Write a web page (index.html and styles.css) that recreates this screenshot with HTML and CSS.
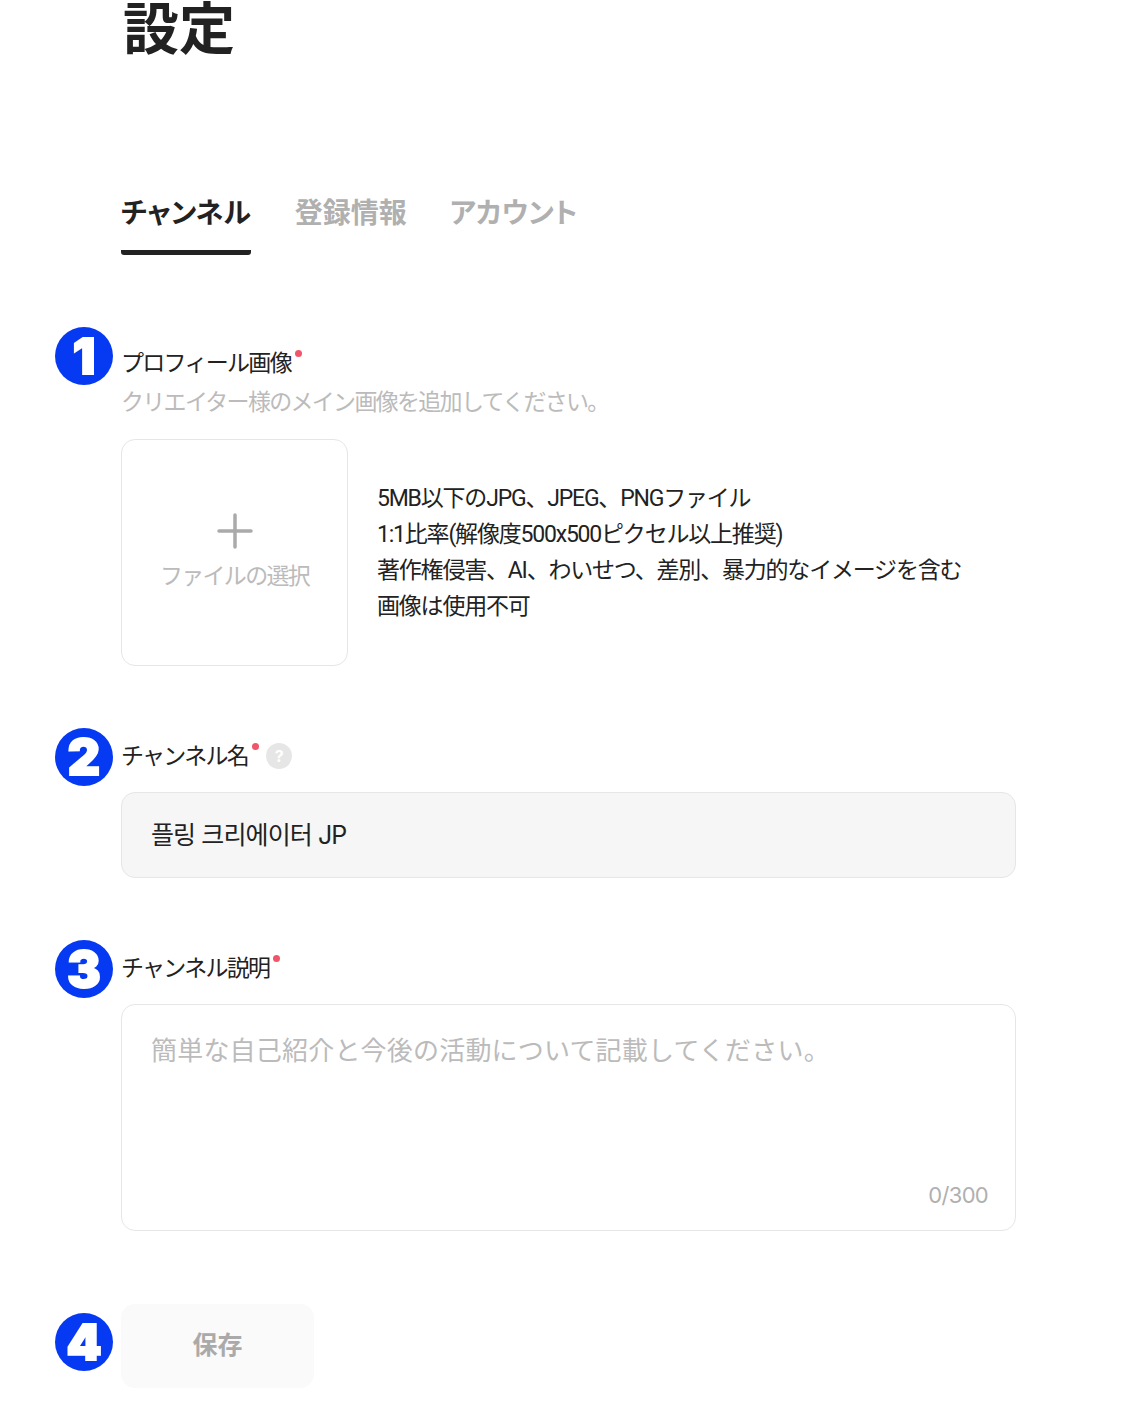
FILE: index.html
```html
<!DOCTYPE html>
<html lang="ja">
<head>
    <meta charset="UTF-8">
    <title>設定</title>
    <link rel="stylesheet" href="styles.css">
</head>
<body>
<div class="page">
    <h1 class="title">設定</h1>
    <ul class="tabs">
        <li class="active">チャンネル</li>
        <li>登録情報</li>
        <li>アカウント</li>
    </ul>

    <div class="section first">
        <div class="num">1</div>
        <div class="label">プロフィール画像<span class="req"></span></div>
        <div class="sub">クリエイター様のメイン画像を追加してください。</div>
        <div class="upload-row">
            <div class="upload">
                <svg class="plus" width="36" height="36" viewBox="0 0 36 36">
                    <path d="M18 2V34M2 18H34" stroke="#aaaaaa" stroke-width="3.5" stroke-linecap="round" fill="none"/>
                </svg>
                <span>ファイルの選択</span>
            </div>
            <div class="notes">
                <p>5MB以下のJPG、JPEG、PNGファイル</p>
                <p>1:1比率(解像度500x500ピクセル以上推奨)</p>
                <p>著作権侵害、AI、わいせつ、差別、暴力的なイメージを含む</p>
                <p>画像は使用不可</p>
            </div>
        </div>
    </div>

    <div class="section second">
        <div class="num">2</div>
        <div class="label">チャンネル名<span class="req"></span><span class="help">?</span></div>
        <div class="input">플링 크리에이터 JP</div>
    </div>

    <div class="section third">
        <div class="num">3</div>
        <div class="label">チャンネル説明<span class="req"></span></div>
        <div class="textarea">
            <div class="holder">簡単な自己紹介と今後の活動について記載してください。</div>
            <div class="count">0/300</div>
        </div>
    </div>

    <div class="section fourth">
        <div class="num">4</div>
        <div class="save">保存</div>
    </div>
</div>
</body>
</html>
```

FILE: styles.css
```css
*{
    margin: 0;
    padding: 0;
    list-style: none;
    box-sizing: border-box;
}
html,body{
    height: 1408px;
    overflow: hidden;
    background-color: #ffffff;
}
body{
    font-family: "Inter", "Noto Sans CJK JP", "Noto Sans CJK KR", sans-serif;
    color: #222222;
}
.page{
    padding-left: 121px;
    width: 1016px;
}
.title{
    font-family: "Noto Sans CJK JP", sans-serif;
    font-size: 56px;
    line-height: 50px;
    font-weight: 700;
    padding-left: 2px;
}
.tabs{
    display: flex;
    gap: 43px;
    margin-top: 120px;
}
.tabs li{
    font-size: 28px;
    line-height: 40px;
    font-weight: 700;
    color: #b0b0b0;
    height: 85px;
    padding-top: 23px;
    font-feature-settings: "palt";
}
.tabs .active{
    color: #222222;
    border-bottom: 5px solid #222222;
    border-radius: 0 0 3px 3px;
    margin-right: 1px;
}
.section{
    position: relative;
}
.first{
    margin-top: 89px;
}
.second{
    margin-top: 71px;
}
.third{
    margin-top: 71px;
}
.fourth{
    margin-top: 73px;
}
.num{
    position: absolute;
    left: -66px;
    top: -9px;
    width: 58px;
    height: 58px;
    border-radius: 50%;
    background-color: #0639f2;
    color: #ffffff;
    font-family: "Inter", sans-serif;
    font-size: 50px;
    line-height: 58px;
    font-weight: 900;
    text-align: center;
    -webkit-text-stroke: 2px #ffffff;
}
.first .num{
    top: -17px;
}
.fourth .num{
    top: 9px;
}
.label{
    display: flex;
    align-items: center;
    font-size: 23px;
    line-height: 34px;
    letter-spacing: -1.7px;
    color: #222222;
    height: 36px;
    padding-top: 2px;
}
.req{
    width: 7px;
    height: 7px;
    border-radius: 50%;
    background-color: #f0566a;
    margin: -20px 0 0 4px;
}
.help{
    width: 26px;
    height: 26px;
    border-radius: 50%;
    background-color: #e6e6e6;
    color: #ffffff;
    font-size: 16px;
    font-weight: 700;
    line-height: 26px;
    text-align: center;
    margin-left: 7px;
    letter-spacing: 0;
}
.sub{
    font-size: 23px;
    line-height: 36px;
    letter-spacing: -1.7px;
    color: #bbbbbb;
    margin-top: 4px;
}
.upload-row{
    display: flex;
    align-items: center;
    gap: 29px;
    margin-top: 19px;
}
.upload{
    width: 227px;
    height: 227px;
    padding-top: 1px;
    border: 1px solid #e6e6e6;
    border-radius: 14px;
    display: flex;
    flex-direction: column;
    align-items: center;
    justify-content: center;
    gap: 10px;
    font-size: 23px;
    line-height: 34px;
    letter-spacing: -1.7px;
    color: #bbbbbb;
}
.notes{
    font-family: "Roboto", "Noto Sans CJK JP", sans-serif;
    font-size: 23px;
    line-height: 36px;
    letter-spacing: -1.2px;
    color: #222222;
}
.input{
    height: 86px;
    margin-top: 19px;
    padding: 0 29px;
    background-color: #f6f6f6;
    border: 1px solid #e6e6e6;
    border-radius: 14px;
    font-size: 25px;
    line-height: 84px;
    letter-spacing: -0.9px;
    color: #222222;
}
.textarea{
    position: relative;
    height: 227px;
    margin-top: 19px;
    padding: 27px 29px;
    border: 1px solid #e6e6e6;
    border-radius: 14px;
}
.holder{
    font-size: 26px;
    line-height: 38px;
    letter-spacing: 0.2px;
    color: #bbbbbb;
}
.count{
    position: absolute;
    right: 27px;
    bottom: 18px;
    font-size: 22px;
    line-height: 34px;
    letter-spacing: -0.7px;
    color: #b0b0b0;
}
.save{
    width: 193px;
    height: 84px;
    background-color: #fafafa;
    border-radius: 14px;
    text-align: center;
    font-size: 25px;
    font-weight: 700;
    line-height: 82px;
    color: #aaaaaa;
}
```
